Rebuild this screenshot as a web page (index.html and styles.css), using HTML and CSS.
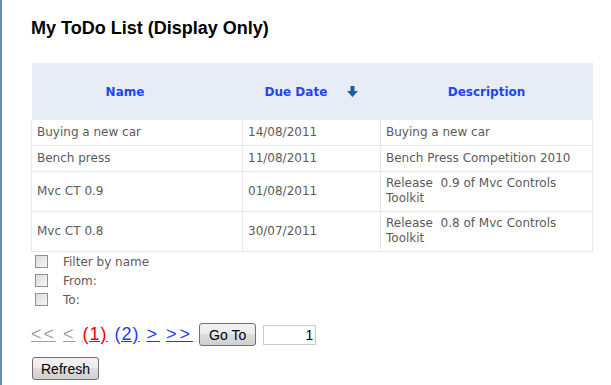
FILE: index.html
```html
<!DOCTYPE html>
<html lang="en">
<head>
    <meta charset="UTF-8">
    <title>My ToDo List</title>
    <link rel="stylesheet" href="styles.css">
</head>
<body>
    <div class="page">
        <h1>My ToDo List (Display Only)</h1>

        <table class="grid">
            <thead>
                <tr>
                    <th class="col-name"><a href="#">Name</a></th>
                    <th class="col-date">
                        <a href="#">Due Date</a>
                        <svg class="sort" width="11" height="11" viewBox="0 0 11 11">
                            <path d="M3.5 0h4v5h3.5l-5.5 6l-5.5-6h3.5z" fill="#1c5ea6"/>
                        </svg>
                    </th>
                    <th class="col-desc"><a href="#">Description</a></th>
                </tr>
            </thead>
            <tbody>
                <tr>
                    <td>Buying a new car</td>
                    <td>14/08/2011</td>
                    <td>Buying a new car</td>
                </tr>
                <tr>
                    <td>Bench press</td>
                    <td>11/08/2011</td>
                    <td>Bench Press Competition 2010</td>
                </tr>
                <tr class="tall">
                    <td>Mvc CT 0.9</td>
                    <td>01/08/2011</td>
                    <td>Release &nbsp;0.9 of Mvc Controls Toolkit</td>
                </tr>
                <tr class="tall">
                    <td>Mvc CT 0.8</td>
                    <td>30/07/2011</td>
                    <td>Release &nbsp;0.8 of Mvc Controls Toolkit</td>
                </tr>
            </tbody>
        </table>

        <div class="filters">
            <label class="filter"><span class="box"></span>Filter by name</label>
            <label class="filter"><span class="box"></span>From:</label>
            <label class="filter"><span class="box"></span>To:</label>
        </div>

        <div class="pager">
            <a class="off" href="#">&lt;&lt;</a>
            <a class="off" href="#">&lt;</a>
            <a class="num current" href="#">(1)</a>
            <a class="num" href="#">(2)</a>
            <a class="wide" href="#">&gt;</a>
            <a class="wide" href="#">&gt;&gt;</a>
            <button class="btn goto">Go To</button>
            <input class="page-input" type="text" value="1">
        </div>

        <button class="btn refresh">Refresh</button>
    </div>
</body>
</html>
```

FILE: styles.css
```css
body {
    margin: 0;
    background: #fff;
    font-family: Tahoma, "DejaVu Sans", Verdana, sans-serif;
}

.page {
    border-left: 2px solid #6b8db4;
    min-height: 385px;
    box-sizing: border-box;
    padding: 17px 0 0 29px;
}

h1 {
    font-family: "Liberation Sans", Arial, sans-serif;
    font-size: 18px;
    font-weight: bold;
    color: #000;
    margin: 0 0 24px 0;
    line-height: 22px;
}

.grid {
    width: 562px;
    border-collapse: collapse;
    table-layout: fixed;
    font-size: 12px;
    color: #5e5a58;
}

.grid th {
    background-color: #e8edf5;
    height: 57px;
    padding: 0;
    font-weight: bold;
    font-size: 12px;
    text-align: center;
}

.grid th a {
    color: #1d45f0;
    text-decoration: none;
}

.grid th.col-name {
    width: 187px;
    padding-right: 24px;
}

.grid th.col-date {
    width: 138px;
}

.sort {
    margin-left: 16px;
    vertical-align: -1px;
}

.grid td {
    border: 1px solid #e3e8f1;
    padding: 5px 5px;
    line-height: 15px;
    vertical-align: middle;
}

.grid tr.tall td {
    padding: 4px 5px 5px;
}

.grid tbody tr:first-child td {
    border-top: none;
}

.filters {
    padding: 0 0 0 4px;
}

.filter {
    display: flex;
    align-items: center;
    height: 19px;
    font-size: 12px;
    color: #5e5a58;
}

.box {
    width: 11px;
    height: 11px;
    border: 1px solid #8f8f8f;
    background: linear-gradient(135deg, #dcdcdc, #f6f6f6);
    margin-right: 15px;
}

.pager {
    display: flex;
    align-items: center;
    margin-top: 14px;
    font-family: "Liberation Sans", Arial, sans-serif;
    font-size: 18px;
}

.pager a {
    color: #1a3cff;
    margin-right: 7px;
    letter-spacing: 2px;
}

.pager a.num {
    letter-spacing: 1px;
}

.pager a.wide {
    letter-spacing: 3px;
    margin-right: 6px;
}

.pager a.off {
    color: #a0a0a0;
}

.pager a.current {
    color: #f00000;
}

.btn {
    font-family: "Liberation Sans", Arial, sans-serif;
    font-size: 14px;
    color: #000;
    height: 23px;
    padding: 0 9px;
    border: 1px solid #707070;
    border-radius: 3px;
    background: linear-gradient(#f2f2f2, #ebebeb 50%, #dddddd 50%, #cfcfcf);
}

.page-input {
    width: 47px;
    height: 18px;
    margin-left: 7px;
    border: 1px solid #c9c9c9;
    padding: 0 2px;
    text-align: right;
    font-family: "Liberation Sans", Arial, sans-serif;
    font-size: 14px;
}

.refresh {
    margin: 11px 0 0 1px;
    padding: 0 8px;
}
```
